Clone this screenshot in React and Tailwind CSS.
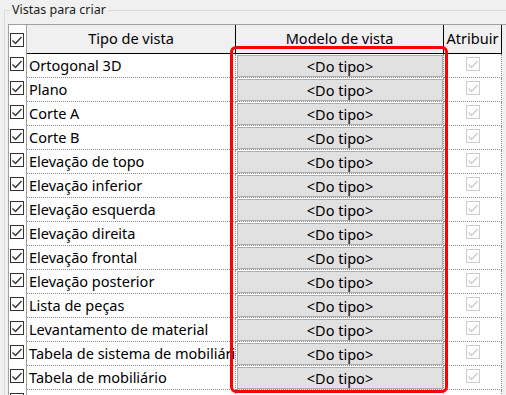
import React from 'react';

const rows = [
  'Ortogonal 3D',
  'Plano',
  'Corte A',
  'Corte B',
  'Elevação de topo',
  'Elevação inferior',
  'Elevação esquerda',
  'Elevação direita',
  'Elevação frontal',
  'Elevação posterior',
  'Lista de peças',
  'Levantamento de material',
  'Tabela de sistema de mobiliário',
  'Tabela de mobiliário',
];

function Check({ checked = true, disabled = false }) {
  const color = disabled ? '#cccccc' : '#333333';
  return (
    <div
      className="w-[14px] h-[14px] border bg-white"
      style={{ borderColor: color }}
    >
      {checked && (
        <svg width="12" height="12" viewBox="0 0 12 12" className="block">
          <polyline points="1.5,6.5 4.5,9.5 10.5,3" fill="none" stroke={color} strokeWidth="1.3" />
        </svg>
      )}
    </div>
  );
}

function Row({ name, last }) {
  return (
    <div className="flex h-[24px]">
      <div className="w-[18px] shrink-0 border-r border-[#a0a0a0] bg-white pl-[1px] pt-[3px]">
        <Check checked={!last} />
      </div>
      <div className="w-[209px] shrink-0 border-r border-b border-dotted border-[#8c8c8c] bg-white pl-[2px] overflow-hidden whitespace-nowrap leading-[23px]">
        {name}
      </div>
      <div className="w-[208px] shrink-0 border-r border-b border-dotted border-[#8c8c8c] bg-white pl-[1px] pt-[1px]">
        {!last && (
          <div className="h-[22px] border border-[#adadad] bg-[#e1e1e1] flex items-center justify-center leading-none">
            &lt;Do tipo&gt;
          </div>
        )}
      </div>
      <div className="w-[58px] shrink-0 border-r border-b border-dotted border-[#8c8c8c] bg-white flex justify-center pt-[3px]">
        {!last && <Check disabled />}
      </div>
    </div>
  );
}

export default function App() {
  return (
    <div
      className="relative w-[506px] h-[395px] overflow-hidden bg-[#f0f0f0] text-black"
      style={{ fontFamily: '"Noto Sans", "Open Sans", sans-serif' }}
    >
      <fieldset className="ml-[4px] w-[520px] h-[420px] border border-[#dcdcdc]">
        <legend className="ml-[5px] px-[2px] text-[12.5px] leading-[20px] text-[#1a1a1a]">
          Vistas para criar
        </legend>
        <div className="ml-[3px] mt-[4px] border-t border-l border-[#a0a0a0] text-[14.5px]">
          <div className="flex h-[29px]">
            <div className="w-[18px] shrink-0 border-r border-[#a0a0a0] bg-white pl-[1px] pt-[8px]">
              <Check />
            </div>
            <div className="w-[209px] shrink-0 border-r border-b border-black bg-[#f0f0f0] flex items-center justify-center">
              Tipo de vista
            </div>
            <div className="w-[208px] shrink-0 border-r border-b border-black bg-[#f0f0f0] flex items-center justify-center">
              Modelo de vista
            </div>
            <div className="w-[58px] shrink-0 border-r border-b border-black bg-[#f0f0f0] flex items-center justify-center">
              Atribuir
            </div>
          </div>
          {rows.map((r) => (
            <Row key={r} name={r} />
          ))}
          <Row name="" last />
        </div>
      </fieldset>
      <div className="absolute left-[230px] top-[46px] w-[218px] h-[347px] border-[3px] border-[#ff0000] rounded-[6px] pointer-events-none" />
    </div>
  );
}
